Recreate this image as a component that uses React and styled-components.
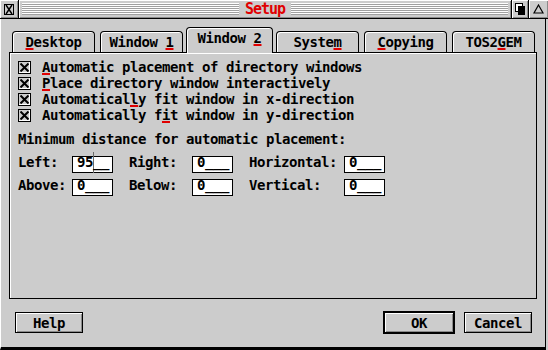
import React from "react";
import styled, { createGlobalStyle } from "styled-components";

const FONT = '"DejaVu Sans Mono", "Liberation Mono", monospace';
const GREY = "#cccccc";
const RED = "#e00000";

const Global = createGlobalStyle`
  html, body { margin: 0; padding: 0; background: ${GREY}; }
  #root { width: 548px; height: 350px; overflow: hidden; }
  * { box-sizing: border-box; }
`;

const Window = styled.div`
  width: 548px;
  height: 350px;
  display: flex;
  flex-direction: column;
  background: ${GREY};
  font-family: ${FONT};
  font-weight: bold;
  font-size: 14px;
  letter-spacing: -0.43px;
  line-height: 16px;
  color: #000;
`;

const TitleBar = styled.div`
  display: flex;
  height: 19px;
  gap: 1px;
  padding-bottom: 1px;
  background: #000;
  flex: none;
`;

const TitleButton = styled.div`
  width: ${(p) => p.$w}px;
  flex: none;
  display: flex;
  align-items: center;
  justify-content: center;
  background: ${GREY};
  box-shadow: inset 1px 1px #fff, inset -1px -1px #8a8a8a;
`;

const TitleArea = styled.div`
  flex: 1;
  display: flex;
  align-items: center;
  justify-content: center;
  padding: 3px 3px;
  background: repeating-linear-gradient(#ffffff 0 1px, #a0a0a0 1px 2px) content-box,
    ${GREY};
  box-shadow: inset 1px 1px #fff, inset -1px -1px #8a8a8a;
`;

const TitleText = styled.span`
  padding: 0 6px;
  background: ${GREY};
  color: ${RED};
  font-size: 15px;
  letter-spacing: -1px;
  line-height: 13px;
  height: 13px;
  display: flex;
  align-items: center;
`;

const Work = styled.div`
  flex: 1;
  display: flex;
  flex-direction: column;
  border-left: 1px solid #fff;
  border-right: 1px solid #000;
  border-bottom: 3px solid #000;
  margin-right: 2px;
`;

const TabRow = styled.div`
  display: flex;
  align-items: flex-end;
  gap: 5px;
  margin: 8px 0 0 11px;
`;

const Tab = styled.div`
  position: relative;
  z-index: ${(p) => (p.$active ? 1 : 0)};
  width: ${(p) => (p.$active ? 87 : 83)}px;
  height: ${(p) => (p.$active ? 26 : 21)}px;
  margin: ${(p) => (p.$active ? "0 -2px -1px" : "0")};
  border: 1px solid #000;
  border-bottom: none;
  border-radius: 4px 4px 0 0;
  background: ${GREY};
  box-shadow: inset 1px 1px #fff;
  padding-top: 2px;
  text-align: center;
  white-space: pre;
`;

const Panel = styled.div`
  margin-left: 8px;
  width: 528px;
  height: 247px;
  flex: none;
  border: 1px solid #000;
  box-shadow: inset 1px 1px #fff;
  padding: 6px 8px 0 8px;
`;

const CheckRow = styled.div`
  display: flex;
  align-items: center;
  gap: 11px;
  height: 16px;
  white-space: pre;
`;

const Box = styled.span`
  width: 13px;
  height: 13px;
  flex: none;
  display: flex;
  align-items: center;
  justify-content: center;
  border: 1px solid #000;
  background: ${GREY};
  box-shadow: inset -1px -1px #fff;
`;

const Heading = styled.div`
  margin-top: 8px;
  white-space: pre;
`;

const FieldGrid = styled.div`
  display: grid;
  grid-template-columns: 54px 57px 63px 57px 95px 41px;
  grid-auto-rows: 17px;
  row-gap: 6px;
  margin-top: 9px;
`;

const Label = styled.span`
  line-height: 13px;
  align-self: start;
  white-space: pre;
`;

const Field = styled.span`
  width: 41px;
  height: 17px;
  border: 1px solid #000;
  background: #fff;
  padding-left: 4px;
  line-height: 10px;
  white-space: pre;
`;

const Cursor = styled.span`
  display: inline-block;
  width: 1px;
  height: 21px;
  margin: -5px -1px -16px 0;
  background: #6a6a6a;
  vertical-align: top;
`;

const ButtonRow = styled.div`
  display: flex;
  align-items: center;
  justify-content: space-between;
  margin-top: 12px;
  padding: 0 13px 0 14px;
`;

const ButtonGroup = styled.div`
  display: flex;
  align-items: center;
  gap: 9px;
`;

const Button = styled.div`
  width: ${(p) => (p.$default ? 72 : 68)}px;
  height: ${(p) => (p.$default ? 23 : 21)}px;
  border: ${(p) => (p.$default ? 2 : 1)}px solid #000;
  background: ${GREY};
  box-shadow: inset 1px 1px #fff, inset -1px -1px #8a8a8a;
  display: flex;
  align-items: center;
  justify-content: center;
  line-height: 16px;
`;

const Hot = styled.span`
  text-decoration: underline 2px ${RED};
  text-underline-offset: 1px;
`;

const CloserIcon = () => (
  <svg width="10" height="13" viewBox="0 0 10 13">
    <path d="M1 1.5H9M1 11.5H9" stroke="#000" strokeWidth="1" />
    <path d="M2 2L8 11M8 2L2 11" stroke="#000" strokeWidth="1.4" />
    <path d="M0.5 1V12M9.5 1V12" stroke="#000" strokeWidth="1" />
  </svg>
);

const BackdropIcon = () => (
  <svg width="10" height="12" viewBox="0 0 10 12">
    <rect x="0.5" y="0.5" width="7" height="8" fill="#fff" stroke="#000" />
    <rect x="3" y="3" width="7" height="9" fill="#000" />
  </svg>
);

const FullIcon = () => (
  <svg width="11" height="10" viewBox="0 0 11 10">
    <path d="M5.5 1L10 9H1Z" fill="none" stroke="#000" strokeWidth="1.2" />
  </svg>
);

const CheckX = () => (
  <svg width="9" height="9" viewBox="0 0 9 9">
    <path d="M0.5 0.5L8.5 8.5M8.5 0.5L0.5 8.5" stroke="#000" strokeWidth="2" />
  </svg>
);

const label = (parts) =>
  parts.map((p, i) => (i % 2 === 1 ? <Hot key={i}>{p}</Hot> : <React.Fragment key={i}>{p}</React.Fragment>));

const tabs = [
  ["", "D", "esktop"],
  ["Window ", "1", ""],
  ["Window ", "2", ""],
  ["Syste", "m", ""],
  ["", "C", "opying"],
  ["TOS2", "G", "EM"],
];

const checks = [
  ["", "A", "utomatic placement of directory windows"],
  ["", "P", "lace directory window interactively"],
  ["Automatical", "l", "y fit window in x-direction"],
  ["Automatically f", "i", "t window in y-direction"],
];

export default function App() {
  return (
    <Window>
      <Global />
      <TitleBar>
        <TitleButton $w={18}>
          <CloserIcon />
        </TitleButton>
        <TitleArea>
          <TitleText>Setup</TitleText>
        </TitleArea>
        <TitleButton $w={16}>
          <BackdropIcon />
        </TitleButton>
        <TitleButton $w={19}>
          <FullIcon />
        </TitleButton>
      </TitleBar>
      <Work>
        <TabRow>
          {tabs.map((t, i) => (
            <Tab key={i} $active={i === 2}>
              {label(t)}
            </Tab>
          ))}
        </TabRow>
        <Panel>
          {checks.map((c, i) => (
            <CheckRow key={i}>
              <Box>
                <CheckX />
              </Box>
              <span>{label(c)}</span>
            </CheckRow>
          ))}
          <Heading>Minimum distance for automatic placement:</Heading>
          <FieldGrid>
            <Label>Left:</Label>
            <Field>
              95<Cursor />__
            </Field>
            <Label>Right:</Label>
            <Field>0___</Field>
            <Label>Horizontal:</Label>
            <Field>0___</Field>
            <Label>Above:</Label>
            <Field>0___</Field>
            <Label>Below:</Label>
            <Field>0___</Field>
            <Label>Vertical:</Label>
            <Field>0___</Field>
          </FieldGrid>
        </Panel>
        <ButtonRow>
          <Button>Help</Button>
          <ButtonGroup>
            <Button $default>OK</Button>
            <Button>Cancel</Button>
          </ButtonGroup>
        </ButtonRow>
      </Work>
    </Window>
  );
}
